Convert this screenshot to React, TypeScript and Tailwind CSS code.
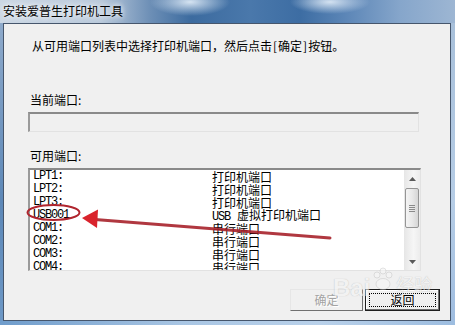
import React from "react";

const rows = [
  { port: "LPT1:", desc: "打印机端口" },
  { port: "LPT2:", desc: "打印机端口" },
  { port: "LPT3:", desc: "打印机端口" },
  { port: "USB001", prefix: "USB", desc: "虚拟打印机端口" },
  { port: "COM1:", desc: "串行端口" },
  { port: "COM2:", desc: "串行端口" },
  { port: "COM3:", desc: "串行端口" },
  { port: "COM4:", desc: "串行端口" },
];

function ScrollBar() {
  return (
    <div className="w-[16px] shrink-0 flex flex-col bg-[linear-gradient(90deg,#e6e6e6,#f6f6f6_60%,#ececec)]">
      <div className="h-[17px] flex items-center justify-center">
        <svg width="7" height="4" viewBox="0 0 7 4">
          <polygon points="0,4 3.5,0 7,4" fill="#5a5a5a" />
        </svg>
      </div>
      <div className="mt-[1px] mx-[1px] h-[40px] rounded-[2px] border border-[#959595] bg-[linear-gradient(90deg,#f4f4f4,#e9e9e9_50%,#d6d6d6)] flex flex-col items-center justify-center gap-[1px]">
        <div className="w-[6px] h-px bg-[#8a8a8a]" />
        <div className="w-[6px] h-px bg-[#8a8a8a]" />
        <div className="w-[6px] h-px bg-[#8a8a8a]" />
        <div className="w-[6px] h-px bg-[#8a8a8a]" />
      </div>
      <div className="flex-1" />
      <div className="h-[17px] flex items-center justify-center">
        <svg width="7" height="4" viewBox="0 0 7 4">
          <polygon points="0,0 7,0 3.5,4" fill="#5a5a5a" />
        </svg>
      </div>
    </div>
  );
}

export default function App() {
  const mono = "font-['Liberation_Mono',monospace] text-[12px] tracking-[-1.2px]";
  return (
    <div className="relative w-[455px] h-[325px] overflow-hidden flex flex-col bg-[#8fb0d3] font-['Noto_Sans_CJK_SC',sans-serif] text-[12px] text-black">
      {/* title bar */}
      <div className="h-[23px] shrink-0 flex items-center pl-[3px] pb-[2px] bg-[radial-gradient(ellipse_40px_14px_at_190px_2px,#d6e4f2,transparent),radial-gradient(ellipse_40px_12px_at_330px_2px,#d4e2f1,transparent),linear-gradient(90deg,#cbd7e4_0%,#b9c9db_22%,#6d8fb6_33%,#3c6b9f_42%,#4a78ab_55%,#3d6da3_66%,#5c86b7_76%,#86a6cb_88%,#9db6d3_100%)]">
        <span className="leading-4 [text-shadow:0_0_5px_#fff,0_0_8px_#fff]">安装爱普生打印机工具</span>
      </div>

      <div className="flex flex-1">
        <div className="w-[3px] bg-[linear-gradient(180deg,#8eaacb,#5d88b8_60%,#6d98c6)]" />

        {/* client area */}
        <div className="flex-1 border border-[#46566c] bg-[#f0f0f0] flex flex-col pl-[24px] pr-[10px]">
          <div className="mt-[14px] ml-[4px] leading-4">
            从可用端口列表中选择打印机端口，然后点击<span className="mx-[1px]">[</span>确定<span className="mx-[1px]">]</span>按钮。
          </div>

          <div className="mt-[38px] ml-[2px] leading-4">当前端口:</div>
          <div className="mt-[4px] w-[391px] h-[20px] border-t-2 border-l-2 border-r border-b border-t-[#8a8a8a] border-l-[#9a9a9a] border-r-[#e2e2e2] border-b-[#e2e2e2] bg-[#f0f0f0]" />

          <div className="mt-[16px] ml-[2px] leading-4">可用端口:</div>
          <div className="mt-[4px] w-[393px] h-[103px] flex overflow-hidden border-t-2 border-l-2 border-r border-b border-t-[#8a8a8a] border-l-[#9a9a9a] border-r-[#e2e2e2] border-b-[#e2e2e2] bg-white">
            <div className="flex-1 pl-[3px] overflow-hidden">
              {rows.map((r) => (
                <div key={r.port} className="h-[13px] flex items-center whitespace-nowrap">
                  <span className={`w-[179px] shrink-0 leading-[13px] ${mono}`}>{r.port}</span>
                  <span className="leading-[13px]">
                    {r.prefix && <span className={`${mono} mr-[7px]`}>{r.prefix}</span>}
                    {r.desc}
                  </span>
                </div>
              ))}
            </div>
            <ScrollBar />
          </div>

          <div className="mt-[18px] flex justify-end gap-[2px]">
            <button className="w-[73px] h-[22px] border border-t-[#e6e6e6] border-l-[#e6e6e6] border-r-[#707070] border-b-[#707070] bg-[#f0f0f0] text-[#a3a3a3] leading-4 [text-shadow:1px_1px_0_#fff]">
              确定
            </button>
            <button className="w-[75px] h-[22px] border border-[#1e1e1e] bg-[#f0f0f0] shadow-[inset_-1px_-1px_0_#707070,inset_1px_1px_0_#ffffff] outline-1 outline-dotted outline-black -outline-offset-[5px] leading-4">
              返回
            </button>
          </div>
        </div>

        <div className="w-[4px] bg-[linear-gradient(180deg,#a8c0da,#b6cde6_60%,#9fbde0)]" />
      </div>
      <div className="h-[4px] shrink-0 bg-[linear-gradient(90deg,#6f9ccb,#a9c6e4_40%,#b9d1ea_70%,#9dbde0)]" />

      {/* red annotation */}
      <svg className="absolute left-0 top-0 pointer-events-none" width="455" height="325" viewBox="0 0 455 325">
        <ellipse cx="53.5" cy="212.5" rx="26" ry="7.5" fill="none" stroke="#b0252e" strokeWidth="2" />
        <line x1="330" y1="238" x2="95" y2="219.5" stroke="#a8232c" strokeWidth="3" strokeLinecap="round" opacity="0.9" />
        <polygon points="82,218 98,209.5 97,228" fill="#d9232c" />
      </svg>

      {/* watermark */}
      <div className="absolute left-[333px] top-[270px] flex items-start opacity-60 pointer-events-none">
        <span className="font-['Liberation_Sans',sans-serif] font-bold text-[24px] leading-[28px] mt-[4px] text-[#f4f4f4] [text-shadow:0_0_1px_#9a9a9a]">Bai</span>
        <svg width="26" height="26" viewBox="0 0 26 26" className="mt-[-4px]">
          <circle cx="7" cy="9" r="3" fill="#f6f6f6" stroke="#b5b5b5" strokeWidth="0.6" />
          <circle cx="13" cy="5" r="3" fill="#f6f6f6" stroke="#b5b5b5" strokeWidth="0.6" />
          <circle cx="19" cy="9" r="3" fill="#f6f6f6" stroke="#b5b5b5" strokeWidth="0.6" />
          <ellipse cx="13" cy="18" rx="7" ry="5.5" fill="#f6f6f6" stroke="#b5b5b5" strokeWidth="0.6" />
        </svg>
        <span className="text-[18px] leading-[24px] mt-[2px] text-[#f4f4f4] [text-shadow:0_0_1px_#9a9a9a]">经验</span>
      </div>
    </div>
  );
}
